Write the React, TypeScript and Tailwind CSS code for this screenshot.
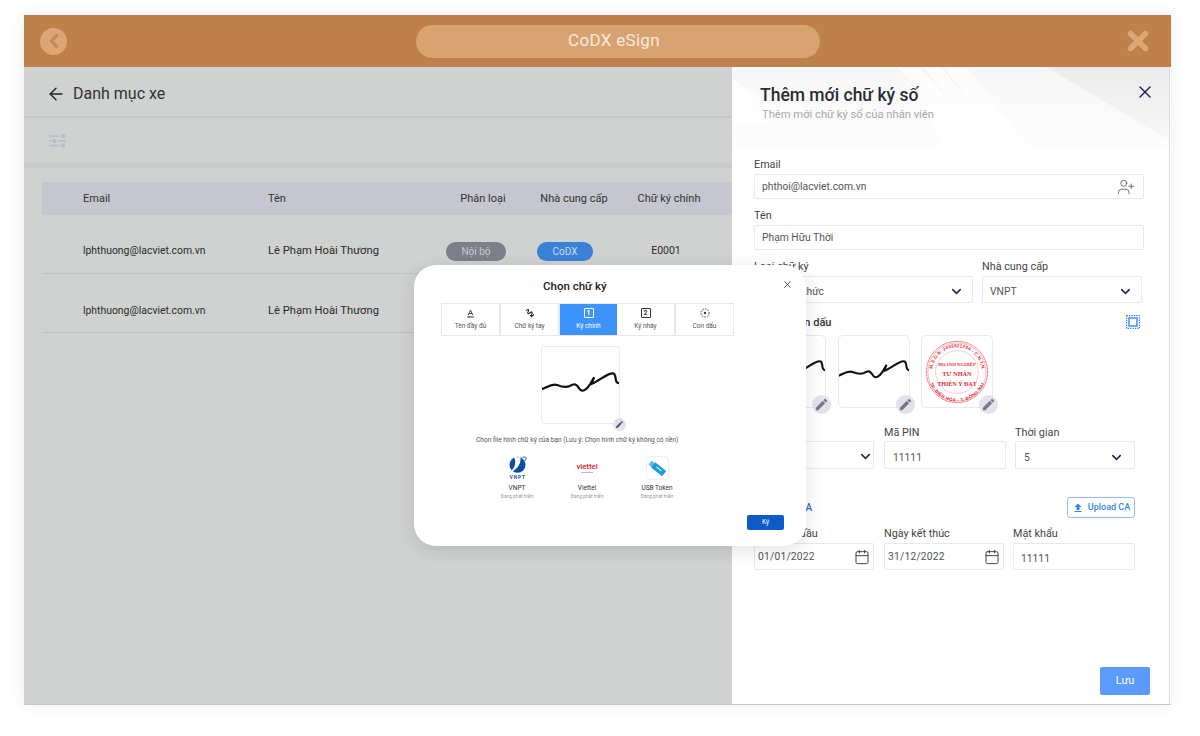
import { ArrowLeft, Calendar, ChevronDown, ChevronLeft, UserPlus, X } from "lucide-react";
import { MdEdit, MdFileUpload } from "react-icons/md";
import type { ReactNode } from "react";

const font = { fontFamily: "Roboto, 'Liberation Sans', sans-serif" };

// Handwritten signature stroke, used in the modal and in the form cards
function Signature({ className }: { className?: string }) {
  return (
    <svg viewBox="0 0 78 78" className={className} fill="none">
      <path
        d="M0 43C5 41 10 37 15 39C20 41 24 42 28 40C33 37 35 38 38 43C41 47 45 44 49 38L53 31L50 38C58 35 66 27 72 27C77 27 73 37 78 37"
        stroke="#111"
        strokeWidth="2.3"
        strokeLinecap="round"
      />
    </svg>
  );
}

// Round company stamp with curved lettering
function Stamp() {
  return (
    <svg viewBox="0 0 72 72" className="w-[70px] h-[70px]" fill="none">
      <defs>
        <path id="stamp-top" d="M10.5 36a25.5 25.5 0 1 1 51 0" />
        <path id="stamp-bottom" d="M5.5 36a30.5 30.5 0 0 0 61 0" />
      </defs>
      <circle cx="36" cy="36" r="31.5" stroke="#e8404c" strokeWidth="1" strokeDasharray="1 0.5" />
      <circle cx="36" cy="36" r="30" stroke="#e8404c" strokeWidth="0.4" />
      <circle cx="36" cy="36" r="22" stroke="#ee7a82" strokeWidth="0.4" />
      <g fill="#e02a38" fontWeight="700">
        <g fontFamily="'Liberation Sans', sans-serif">
          <text fontSize="4.7" letterSpacing="0.2">
            <textPath href="#stamp-top" startOffset="50%" textAnchor="middle">M.S.D.N: 3402621204 - C.N.T.N</textPath>
          </text>
          <text fontSize="4.7" letterSpacing="0.3">
            <textPath href="#stamp-bottom" startOffset="50%" textAnchor="middle">TP. BIÊN HÒA - T. ĐỒNG NAI</textPath>
          </text>
        </g>
        <g fontFamily="'Liberation Serif', serif">
          <text x="36" y="30" fontSize="4.9" textAnchor="middle">DOANH NGHIỆP</text>
          <text x="36" y="40" fontSize="6.5" textAnchor="middle">TƯ NHÂN</text>
          <text x="36" y="50" fontSize="6.2" textAnchor="middle">THIÊN Ý ĐẠT</text>
        </g>
      </g>
    </svg>
  );
}

function VnptLogo() {
  return (
    <svg viewBox="0 0 19 24" className="w-[19px] h-[24px]">
      <circle cx="9.5" cy="8.8" r="8" fill="#0b4ea2" />
      <path d="M5.6 0.9C8.6 4.5 7.8 11.5 1.6 16.5C7.5 15 13.2 9 12.6 1.2Z" fill="#fff" />
      <path d="M14.5 1.6C18.6 0 19 2 16.8 5" stroke="#0b4ea2" strokeWidth="0.9" fill="none" />
      <text x="9.8" y="23.4" fontSize="4.6" fontWeight="700" fill="#0b4ea2" textAnchor="middle" letterSpacing="1" fontFamily="Roboto, sans-serif">VNPT</text>
    </svg>
  );
}

function UsbIcon() {
  return (
    <svg viewBox="0 0 24 24" className="w-[20px] h-[20px]">
      <g transform="rotate(38 12 12)">
        <rect x="1.5" y="9" width="5" height="6" fill="#62b4e6" />
        <rect x="6" y="8" width="17" height="8" rx="1" fill="#1c9ce0" />
        <rect x="10.5" y="10.8" width="8" height="1.4" fill="#cdeafa" />
      </g>
    </svg>
  );
}

// Tab glyphs of the signature picker
function NameGlyph() {
  return (
    <svg viewBox="0 0 12 12" className="w-[9px] h-[9px]" fill="none" stroke="#333" strokeWidth="1.2">
      <path d="M3 8.2 6 1.5l3 6.7M4 6h4" />
      <path d="M1.5 10.6h9" strokeWidth="1.4" />
    </svg>
  );
}

function HandGlyph() {
  return (
    <svg viewBox="0 0 12 12" className="w-[10px] h-[10px]" fill="none" stroke="#222" strokeWidth="1.3">
      <path d="M1.5 3.5C3.5 0.5 5 2 4 4S3 7.5 5 6.5 8 3.5 8.5 5.5 6.5 9 8 9.5s2-1 2.5-2" />
      <path d="M6 8.5 8.5 11" />
    </svg>
  );
}

function NumberGlyph({ n, color }: { n: string; color: string }) {
  return (
    <span
      className="w-[10px] h-[10px] border flex items-center justify-center rounded-[1px] text-[7px] leading-none font-bold"
      style={{ borderColor: color, color }}
    >
      {n}
    </span>
  );
}

function StampGlyph() {
  return (
    <svg viewBox="0 0 12 12" className="w-[10px] h-[10px]" fill="none" stroke="#333">
      <circle cx="6" cy="6" r="4.9" strokeDasharray="2 1.2" />
      <circle cx="6" cy="6" r="1.4" fill="#333" stroke="none" />
    </svg>
  );
}

function PickerTab({ label, icon, active }: { label: string; icon: ReactNode; active?: boolean }) {
  return (
    <div
      className={
        active
          ? "flex-1 flex flex-col items-center justify-center gap-[4px] pt-[1px] bg-[#3c93fb] text-white text-[6.5px]"
          : "flex-1 flex flex-col items-center justify-center gap-[4px] pt-[1px] border-r-2 border-[#e8e8ec] last:border-r-0 text-[#555] text-[6.5px]"
      }
    >
      {icon}
      <span>{label}</span>
    </div>
  );
}

function Provider({ name, logo }: { name: string; logo: ReactNode }) {
  return (
    <div className="w-[70px] flex flex-col items-center">
      <div className="h-[24px] flex flex-col items-center justify-center">{logo}</div>
      <span className="mt-[4px] text-[6.5px] leading-[9px] text-[#333]">{name}</span>
      <span className="text-[4.8px] leading-[8px] text-[#999]">Đang phát triển</span>
    </div>
  );
}

function Label({ children }: { children: ReactNode }) {
  return <div className="h-[14px] leading-[16px] text-[10.8px] text-[#444]">{children}</div>;
}

function Field({
  value,
  className,
  icon,
  pl = "pl-[7px]",
  pr = "pr-2",
}: {
  value: string;
  className: string;
  icon?: ReactNode;
  pl?: string;
  pr?: string;
}) {
  return (
    <div className={`flex items-center justify-between border border-[#e7e8ee] rounded-[2px] bg-white text-[10.3px] text-[#555] ${pl} ${pr} ${className}`}>
      <span>{value}</span>
      {icon}
    </div>
  );
}

const chevron = <ChevronDown size={15} strokeWidth={2.4} className="text-[#1d2455]" />;
const calendar = <Calendar size={16} strokeWidth={1.5} className="text-[#444]" />;

function SignCard({ children }: { children: ReactNode }) {
  return (
    <div className="relative w-[72px] h-[73px] border border-[#e8e8ee] rounded-[5px] bg-white flex items-center justify-center">
      {children}
      <span className="absolute right-[-6px] bottom-[-7px] w-[19px] h-[19px] rounded-full bg-[#e2e2ec] flex items-center justify-center">
        <MdEdit size={15} className="text-[#77778a]" />
      </span>
    </div>
  );
}

function TableRow({ offset }: { offset: string }) {
  return (
    <div className={`h-[59px] flex items-center pl-[41px] border-b border-[#bfc1c3] text-[#2b2b2b] ${offset}`}>
      <span className="w-[185px] text-[10.4px]">lphthuong@lacviet.com.vn</span>
      <span className="w-[170px] text-[11.2px]">Lê Phạm Hoài Thương</span>
      <span className="w-[90px] pl-[8px]">
        <span className="w-[60px] h-[19px] rounded-full bg-[#7e7f88] text-[#c9cad0] text-[10px] flex items-center justify-center">Nội bộ</span>
      </span>
      <span className="w-[92px] pl-[9px]">
        <span className="w-[56px] h-[19px] rounded-full bg-[#3a82d8] text-[#c8dcf5] text-[10px] flex items-center justify-center">CoDX</span>
      </span>
      <span className="w-[92px] text-center text-[10.5px]">E0001</span>
    </div>
  );
}

export default function App() {
  return (
    <div className="w-[1200px] h-[736px] bg-white pt-[15px] pl-[24px] overflow-hidden" style={font}>
      <div className="relative w-[1147px] h-[690px] flex flex-col shadow-[0_0_14px_rgba(0,0,0,0.08)] border-b border-[#c6c6c6]">
        {/* App title bar */}
        <header className="h-[52px] shrink-0 bg-[#be814c] flex items-center pl-[16px] pr-[18px]">
          <span className="w-[27px] h-[27px] rounded-full bg-[#dea574] flex items-center justify-center">
            <ChevronLeft size={22} strokeWidth={3.5} className="text-[#c48a58]" />
          </span>
          <div className="ml-[349px] w-[404px] h-[33px] rounded-full bg-[#d9a271] text-[#f7eadf] text-[17px] tracking-[0.3px] pr-[8px] flex items-center justify-center">
            CoDX eSign
          </div>
          <X size={30} strokeWidth={4.4} className="ml-auto text-[#dea574]" />
        </header>

        <div className="flex-1 flex min-h-0">
          {/* Vehicle list behind the dimmed layer */}
          <main className="w-[708px] bg-[#d0d2d1] flex flex-col overflow-hidden">
            <div className="h-[51px] flex items-center pl-[22px] pt-[5px] border-b-2 border-[#c5c7ca]">
              <ArrowLeft size={20} strokeWidth={1.7} className="text-[#222]" />
              <span className="ml-[7px] text-[16px] text-[#333]">Danh mục xe</span>
            </div>
            <div className="h-[50px] flex items-center pl-[25px] border-b-[5px] border-[#c8cacc]">
              <svg viewBox="0 0 18 16" className="w-[17px] h-[16px]" fill="#babbc8">
                <rect x="0" y="2" width="11" height="1.6" />
                <circle cx="15" cy="2.6" r="2.3" />
                <rect x="0" y="7" width="3" height="1.6" />
                <circle cx="6" cy="7.8" r="2.3" />
                <rect x="10" y="7" width="8" height="1.6" />
                <rect x="0" y="12" width="11" height="1.6" />
                <circle cx="15" cy="12.8" r="2.3" />
              </svg>
            </div>
            <div className="pl-[18px] pt-[14px]">
              <div className="h-[33px] flex items-center pl-[41px] pt-[1px] bg-[#c5c6cf] text-[11px] text-[#333]">
                <span className="w-[185px]">Email</span>
                <span className="w-[170px]">Tên</span>
                <span className="w-[90px] text-center">Phân loại</span>
                <span className="w-[92px] text-center">Nhà cung cấp</span>
                <span className="w-[98px] text-center">Chữ ký chính</span>
              </div>
              <TableRow offset="pt-[14px]" />
              <TableRow offset="pt-[16px]" />
            </div>
          </main>

          {/* Create-signature drawer */}
          <aside className="relative w-[438px] bg-white flex flex-col border-r border-[#dddddd]">
            <div className="relative h-[83px] overflow-hidden pl-[28px] pt-[16px]">
              <svg viewBox="0 0 438 83" className="absolute inset-0 w-full h-full">
                <defs>
                  <linearGradient id="drawer-fade" x1="0" y1="0" x2="0" y2="1">
                    <stop offset="0" stopColor="#ffffff" stopOpacity="0" />
                    <stop offset="1" stopColor="#ffffff" stopOpacity="0.75" />
                  </linearGradient>
                </defs>
                <rect width="438" height="83" fill="#f7f7f8" />
                <path d="M315 0H438V73Z" fill="#ebebeb" />
                <path d="M0 12 60 50 0 60Z" fill="#fdfdfd" />
                <path d="M165 0H235L300 83H215Z" fill="#fcfcfc" />
                <path d="M165 0l22 26M190 0l22 26M210 0l22 26" stroke="#ececec" strokeWidth="1" />
                <rect width="438" height="83" fill="url(#drawer-fade)" />
              </svg>
              <div className="relative text-[17.5px] leading-[24px] font-medium text-[#2a2c34]">Thêm mới chữ ký số</div>
              <div className="relative ml-[2px] text-[11.2px] leading-[16px] text-[#a9a9ae]">Thêm mới chữ ký số của nhân viên</div>
              <X size={20} strokeWidth={1.7} className="absolute right-[14px] top-[15px] text-[#1d2455]" />
            </div>

            <div className="flex-1 flex flex-col pl-[22px] pt-[7px] pb-[9px] pr-[19px]">
              <Label>Email</Label>
              <Field
                value="phthoi@lacviet.com.vn"
                className="mt-[3px] h-[25px] w-[390px]"
                icon={<UserPlus size={18} strokeWidth={1.1} className="text-[#555]" />}
              />
              <div className="mt-[9px]"><Label>Tên</Label></div>
              <Field value="Phạm Hữu Thời" className="mt-[3px] h-[25px] w-[390px]" />

              <div className="mt-[9px] flex gap-[9px]">
                <div className="w-[219px]">
                  <Label>Loại chữ ký</Label>
                  <Field value="Ký chính thức" className="mt-[3px] h-[27px] pt-[4px]" icon={chevron} />
                </div>
                <div className="w-[160px]">
                  <Label>Nhà cung cấp</Label>
                  <Field value="VNPT" className="mt-[3px] h-[27px] pt-[4px]" icon={chevron} />
                </div>
              </div>

              <div className="mt-[12px] w-[390px] flex items-center justify-between pr-[4px]">
                <span className="text-[11px] leading-[16px] font-medium text-[#333]">Chữ ký, con dấu</span>
                <svg viewBox="0 0 14 14" className="w-[14px] h-[14px] mb-[2px]" fill="none">
                  <rect x="0.6" y="0.6" width="12.8" height="12.8" stroke="#2f7df6" strokeWidth="1.2" strokeDasharray="1.3 1.1" />
                  <rect x="3" y="3" width="8" height="8" stroke="#2f7df6" strokeWidth="1.3" />
                </svg>
              </div>

              <div className="mt-[4px] flex">
                <SignCard><Signature className="w-[70px] h-[72px]" /></SignCard>
                <div className="ml-[12px]"><SignCard><Signature className="w-[70px] h-[72px]" /></SignCard></div>
                <div className="ml-[11px]"><SignCard><Stamp /></SignCard></div>
              </div>

              <div className="mt-[17px] flex">
                <div className="w-[120px]">
                  <Label>Loại</Label>
                  <Field value="" className="mt-[2px] h-[28px] pt-[2px]" pr="pr-0" icon={chevron} />
                </div>
                <div className="ml-[10px] w-[122px]">
                  <Label>Mã PIN</Label>
                  <Field value="11111" pl="pl-2" className="mt-[2px] h-[28px] pt-[5px]" />
                </div>
                <div className="ml-[9px] w-[120px]">
                  <Label>Thời gian</Label>
                  <Field value="5" pl="pl-2" pr="pr-[10px]" className="mt-[2px] h-[28px] pt-[5px]" icon={chevron} />
                </div>
              </div>

              <div className="mt-[28px] w-[381px] flex items-center justify-between">
                <span className="text-[10px] font-medium text-[#2a6fdb]">Thông tin CA</span>
                <span className="w-[68px] h-[21px] border border-[#8fbdfb] rounded-[3px] flex items-center justify-center gap-[4px] text-[9px] font-medium text-[#2f86f6]">
                  <MdFileUpload size={12} />
                  Upload CA
                </span>
              </div>

              <div className="mt-[8px] flex">
                <div className="w-[120px]">
                  <Label>Ngày bắt đầu</Label>
                  <Field value="01/01/2022" pl="pl-[3px]" pr="pr-[3px]" className="mt-[3px] h-[27px] tracking-[0.2px]" icon={calendar} />
                </div>
                <div className="ml-[10px] w-[120px]">
                  <Label>Ngày kết thúc</Label>
                  <Field value="31/12/2022" pl="pl-[3px]" pr="pr-[3px]" className="mt-[3px] h-[27px] tracking-[0.2px]" icon={calendar} />
                </div>
                <div className="ml-[9px] w-[122px]">
                  <Label>Mật khẩu</Label>
                  <Field value="11111" className="mt-[3px] h-[27px] pt-[5px]" />
                </div>
              </div>

              <button className="mt-auto self-end w-[50px] h-[28px] rounded-[2px] bg-[#5a9bfb] text-white text-[11px]">Lưu</button>
            </div>
          </aside>
        </div>

        {/* Signature picker dialog */}
        <div className="absolute left-[390px] top-[250px] w-[392px] h-[281px] bg-white rounded-[22px] shadow-[0_4px_18px_rgba(0,0,0,0.12)] pl-[27px] pt-[13px] flex flex-col">
          <X size={11} strokeWidth={1.8} className="absolute right-[13px] top-[14px] text-[#333]" />
          <div className="ml-[102px] text-[11.5px] leading-[16px] font-medium text-[#222]">Chọn chữ ký</div>
          <div className="mt-[9px] w-[293px] h-[33px] border border-[#e8e8ec] flex">
            <PickerTab label="Tên đầy đủ" icon={<NameGlyph />} />
            <PickerTab label="Chữ ký tay" icon={<HandGlyph />} />
            <PickerTab label="Ký chính" active icon={<NumberGlyph n="1" color="#ffffff" />} />
            <PickerTab label="Ký nháy" icon={<NumberGlyph n="2" color="#333333" />} />
            <PickerTab label="Con dấu" icon={<StampGlyph />} />
          </div>
          <div className="relative mt-[10px] ml-[100px] w-[79px] h-[78px] border border-[#ececf0] rounded-[3px]">
            <Signature className="w-full h-full" />
            <span className="absolute right-[-7px] bottom-[-8px] w-[13px] h-[13px] rounded-full bg-[#e2e2ec] flex items-center justify-center">
              <MdEdit size={9} className="text-[#55556a]" />
            </span>
          </div>
          <div className="mt-[11px] ml-[35px] text-[6.6px] leading-[10px] text-[#555]">
            Chọn file hình chữ ký của bạn (Lưu ý: Chọn hình chữ ký không có nền)
          </div>
          <div className="mt-[11px] ml-[41px] flex">
            <Provider name="VNPT" logo={<VnptLogo />} />
            <Provider
              name="Viettel"
              logo={
                <>
                  <span className="text-[8px] leading-[8px] font-medium tracking-[-0.1px] text-[#e0212d]">viettel</span>
                  <span className="mt-[1px] w-[12px] h-[1px] bg-[#bbbbbb]" />
                </>
              }
            />
            <Provider
              name="USB Token"
              logo={
                <span className="w-[23px] h-[24px] rounded-[4px] border border-[#eeeeee] flex items-center justify-center">
                  <UsbIcon />
                </span>
              }
            />
          </div>
          <button className="mt-[14px] ml-[306px] w-[37px] h-[15px] rounded-[2px] bg-[#0d5bc6] text-white text-[6.5px] leading-none">Ký</button>
        </div>
      </div>
    </div>
  );
}
